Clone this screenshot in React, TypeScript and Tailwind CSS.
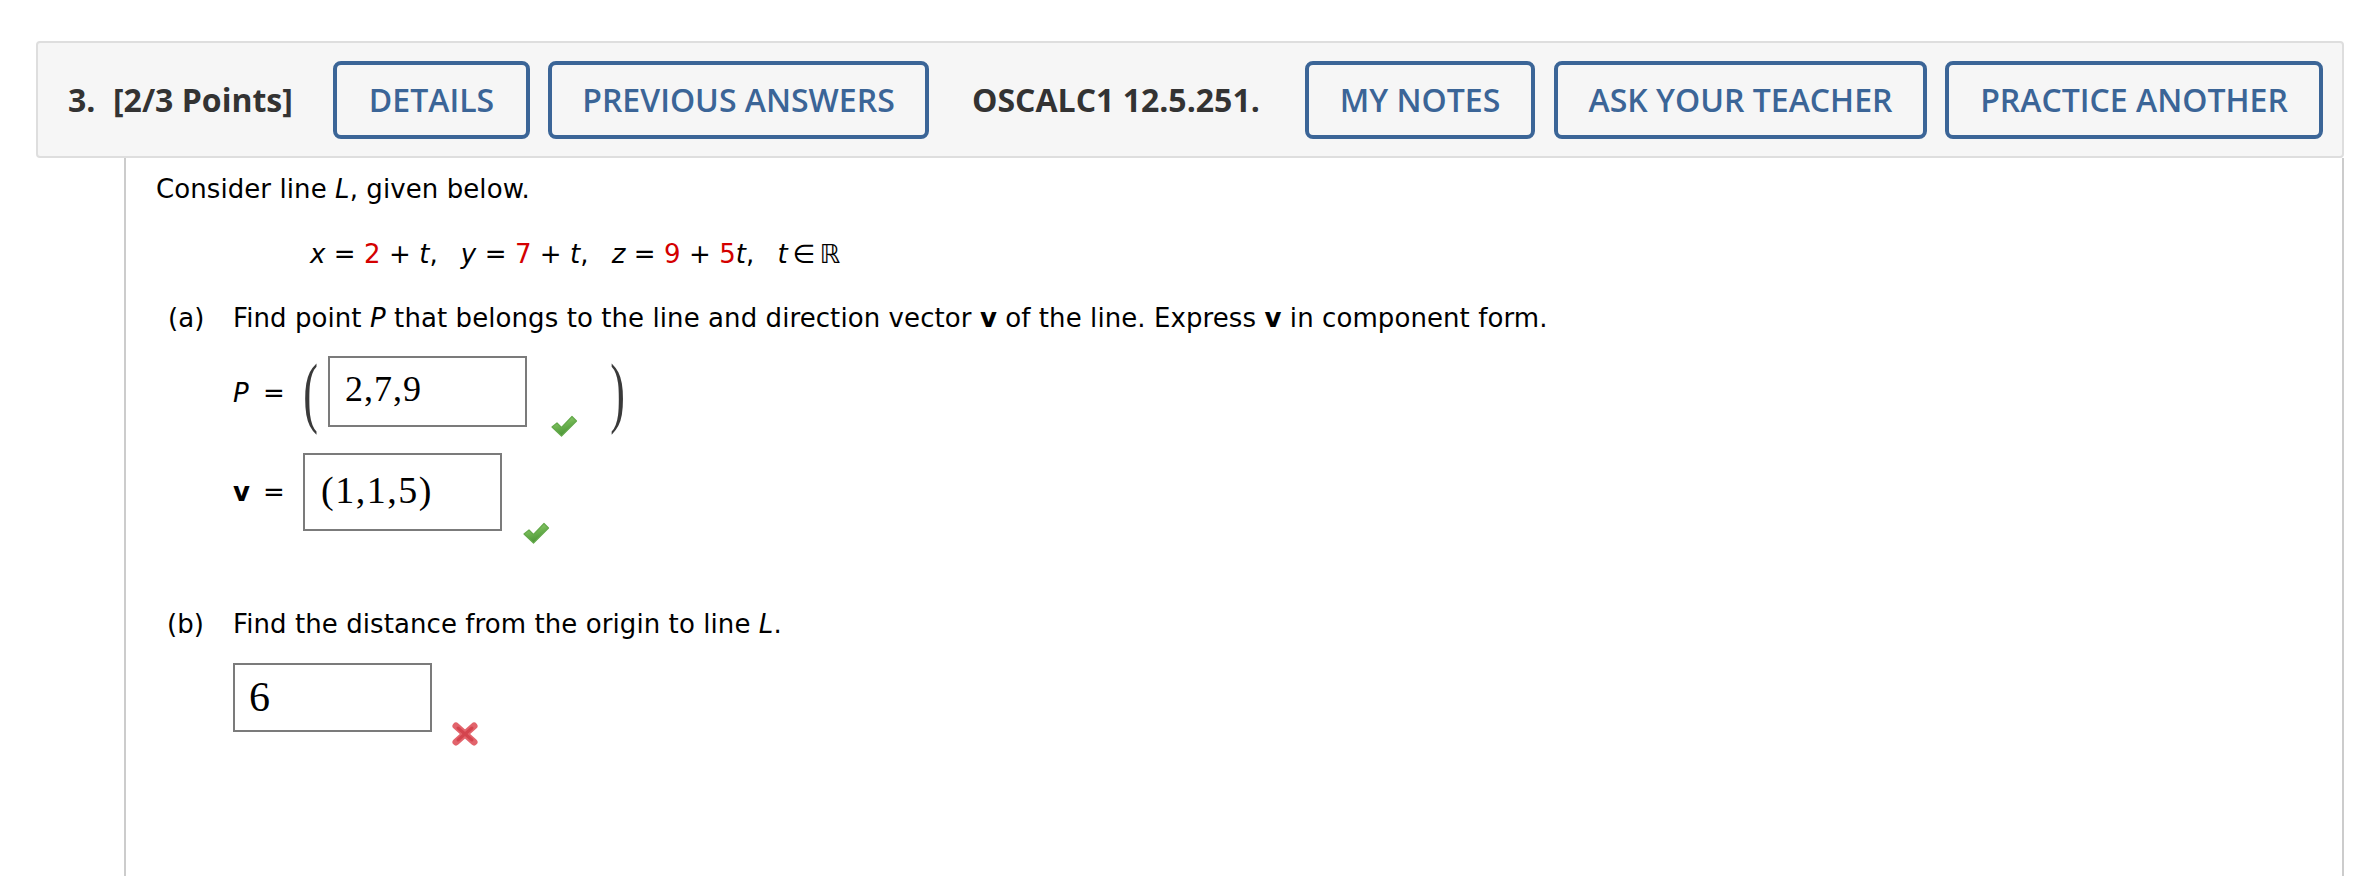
import React from "react";

function Check({ id }: { id: string }) {
  return (
    <svg width="28" height="25" viewBox="0 0 28 25">
      <defs>
        <linearGradient id={id} x1="0" y1="0" x2="0.4" y2="1">
          <stop offset="0" stopColor="#a2d882" />
          <stop offset="0.55" stopColor="#6cb24f" />
          <stop offset="1" stopColor="#4a9436" />
        </linearGradient>
      </defs>
      <path
        d="M2 14 L7 10 L11.5 14.5 L22 3.5 L26.5 8 L11.5 23 Z"
        fill={`url(#${id})`}
        stroke="#63a94a"
        strokeWidth="1.2"
        strokeLinejoin="round"
      />
    </svg>
  );
}

function Cross() {
  return (
    <svg width="28" height="26" viewBox="0 0 28 26">
      <g stroke="#e2646c" strokeWidth="7" strokeLinecap="round">
        <line x1="5" y1="5" x2="23" y2="21" />
        <line x1="23" y1="5" x2="5" y2="21" />
      </g>
      <g stroke="#d4444e" strokeWidth="3" strokeLinecap="round">
        <line x1="7" y1="7" x2="21" y2="19" />
        <line x1="21" y1="7" x2="7" y2="19" />
      </g>
    </svg>
  );
}

function Btn({ w, children }: { w: string; children: React.ReactNode }) {
  return (
    <div
      className={`${w} h-[78px] flex items-center justify-center border-4 border-[#3b6597] rounded-[8px] text-[#3b6597] text-[32px] font-semibold whitespace-nowrap`}
    >
      {children}
    </div>
  );
}

function Paren({ ch }: { ch: string }) {
  return (
    <div className="w-[15px] h-[76px] flex items-center justify-center font-['Liberation_Serif',serif] text-[44px] leading-none text-[#3a3a3a]">
      <span className="inline-block scale-y-[1.8]">{ch}</span>
    </div>
  );
}

const R = ({ children }: { children: React.ReactNode }) => (
  <span className="text-[#d40000]">{children}</span>
);

const Gap = () => <span className="inline-block w-[23px]" />;

export default function App() {
  return (
    <div className="w-[2368px] h-[876px] bg-white overflow-hidden pt-[41px] pl-[36px]">
      <div className="w-[2308px]">
        {/* Header */}
        <div className="flex items-center h-[117px] border-2 border-[#dedede] rounded-[4px] bg-[#f6f6f6] pl-[30px] font-['Open_Sans',sans-serif]">
          <span className="w-[45px] text-[32px] font-bold text-[#333333] whitespace-nowrap">3.</span>
          <span className="w-[220px] text-[32px] font-bold text-[#333333] whitespace-nowrap">[2/3 Points]</span>
          <Btn w="w-[197px]">DETAILS</Btn>
          <div className="ml-[18px]">
            <Btn w="w-[381px]">PREVIOUS ANSWERS</Btn>
          </div>
          <span className="w-[376px] pl-[43px] text-[32px] font-bold text-[#333333] whitespace-nowrap">
            OSCALC1 12.5.251.
          </span>
          <Btn w="w-[230px]">MY NOTES</Btn>
          <div className="ml-[19px]">
            <Btn w="w-[373px]">ASK YOUR TEACHER</Btn>
          </div>
          <div className="ml-[18px]">
            <Btn w="w-[378px]">PRACTICE ANOTHER</Btn>
          </div>
        </div>

        {/* Content */}
        <div className="ml-[88px] w-[2220px] h-[718px] border-x-2 border-[#cccccc] pl-[30px] pt-[12px] font-['DejaVu_Sans',sans-serif] text-[26px] leading-[39px] tracking-[0.08px] text-black">
          <p>
            Consider line <i>L</i>, given below.
          </p>
          <p className="mt-[26px] pl-[154px] whitespace-nowrap">
            <i>x</i> = <R>2</R> + <i>t</i>,<Gap />
            <i>y</i> = <R>7</R> + <i>t</i>,<Gap />
            <i>z</i> = <R>9</R> + <R>5</R>
            <i>t</i>,<Gap />
            <i>t</i>
            <span className="inline-block ml-[5px]">∈</span>
            <span className="inline-block ml-[4px]">ℝ</span>
          </p>

          <div className="mt-[25px] flex whitespace-nowrap">
            <span className="w-[77px] pl-[12px]">(a)</span>
            <span>
              Find point <i>P</i> that belongs to the line and direction vector <b>v</b> of the line. Express{" "}
              <b>v</b> in component form.
            </span>
          </div>

          {/* P row */}
          <div className="mt-[17px] h-[76px] flex items-center pl-[77px]">
            <span className="w-[30px] italic">P</span>
            <span className="w-[22px]">=</span>
            <div className="ml-[18px]">
              <Paren ch="(" />
            </div>
            <div className="ml-[10px] self-start mt-[1px] w-[199px] h-[71px] border-2 border-[#7b7b7b] pl-[15px] pt-[13px] font-['Liberation_Serif',serif] text-[36px] leading-[36px] tracking-[1px]">
              2,7,9
            </div>
            <div className="ml-[23px] self-start mt-[58px]">
              <Check id="chk1" />
            </div>
            <div className="ml-[32px]">
              <Paren ch=")" />
            </div>
          </div>

          {/* v row */}
          <div className="mt-[22px] h-[78px] flex items-center pl-[77px]">
            <span className="w-[30px] font-bold">v</span>
            <span className="w-[22px]">=</span>
            <div className="ml-[18px] w-[199px] h-[78px] border-2 border-[#7b7b7b] pl-[16px] pt-[16px] font-['Liberation_Serif',serif] text-[38px] leading-[38px] tracking-[1.5px]">
              (1,1,5)
            </div>
            <div className="ml-[20px] self-start mt-[67px]">
              <Check id="chk2" />
            </div>
          </div>

          <div className="mt-[74px] flex whitespace-nowrap">
            <span className="w-[77px] pl-[11px]">(b)</span>
            <span>
              Find the distance from the origin to line <i>L</i>.
            </span>
          </div>

          <div className="mt-[19px] flex items-start pl-[77px]">
            <div className="w-[199px] h-[69px] border-2 border-[#7b7b7b] pl-[14px] pt-[11px] font-['Liberation_Serif',serif] text-[42px] leading-[42px]">
              6
            </div>
            <div className="ml-[19px] mt-[58px]">
              <Cross />
            </div>
          </div>
        </div>
      </div>
    </div>
  );
}
